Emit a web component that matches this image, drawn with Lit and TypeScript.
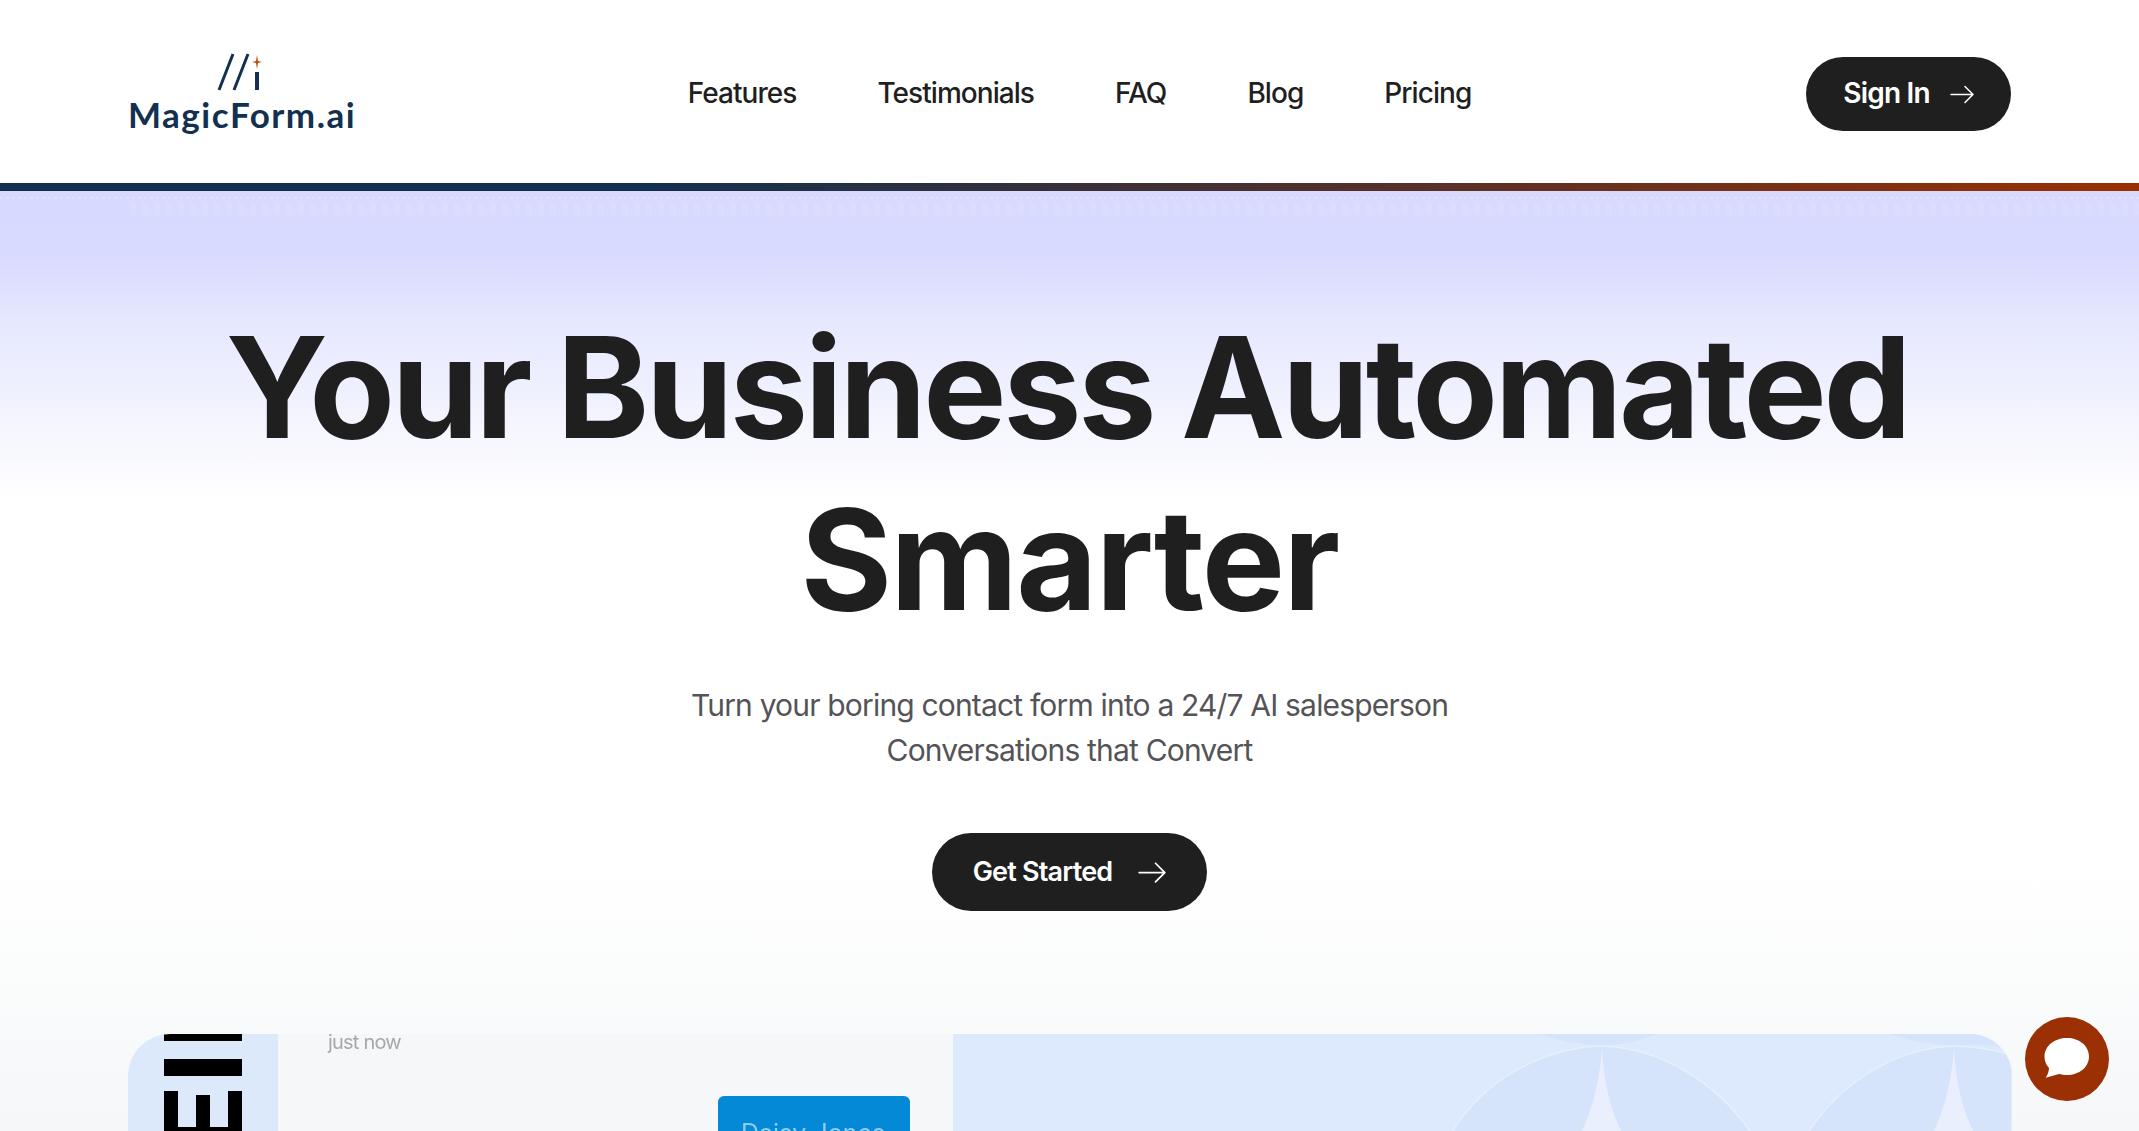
import { LitElement, html, css } from "lit";
import { customElement } from "lit/decorators.js";

const arrow = (size: number) => html`<svg class="arrow" width=${size} height=${size} viewBox="0 0 24 24" fill="none" stroke="currentColor" stroke-width="1.5" stroke-linecap="round" stroke-linejoin="round"><path d="M1 12.500h22M15 4.500l8 8-8 8"/></svg>`;

@customElement("app-root")
export class AppRoot extends LitElement {
  static styles = css`
    :host { display: block; height: 1131px; overflow: hidden; font-family: Inter, "Liberation Sans", sans-serif; color: #1f1f1f; background: #fff; position: relative; }
    header { height: 183px; display: flex; align-items: center; justify-content: space-between; padding: 5px 128px 0; box-sizing: border-box; background: #fff; }
    .logo { width: 228px; display: flex; flex-direction: column; align-items: center; color: #12304f; }
    .logo svg { display: block; }
    .logo span { font-family: Lato, sans-serif; font-size: 35px; line-height: 42px; letter-spacing: 1.5px; font-weight: 700; white-space: nowrap; }
    nav { display: flex; gap: 81px; font-size: 28px; font-weight: 500; letter-spacing: -0.95px; padding-bottom: 3px; margin-right: 3px; }
    .btn { display: inline-flex; align-items: center; justify-content: center; background: #1f1f1f; color: #fff; border-radius: 40px; font-weight: 600; box-sizing: border-box; letter-spacing: -0.8px; }
    .signin { width: 205px; height: 74px; font-size: 28px; gap: 20px; }
    .label { margin-top: -2px; }
    .bar { height: 8px; background: linear-gradient(90deg, #12304f 0%, #12304f 30%, #9a3003 100%); }
    .hero { height: 940px; background: linear-gradient(180deg, #d8d9ff 0%, #d9daff 7%, #e6e8fe 14%, #fff 33%, #fff 72%, #f5f7f8 100%); display: flex; flex-direction: column; align-items: center; position: relative; }
    .hero::before { content: ""; position: absolute; left: 0; right: 0; top: 6px; height: 2px; opacity: .7; background: repeating-linear-gradient(90deg, #e6e8fb 0 3px, transparent 3px 6px); }
    .hero::after { content: ""; position: absolute; left: 130px; right: 0; top: 12px; height: 12px; opacity: .3; background: repeating-linear-gradient(90deg, #e3e5fb 0 6px, transparent 6px 12px); }
    h1 { margin: 110px 0 0; font-size: 140px; line-height: 172px; font-weight: 650; text-align: center; position: relative; z-index: 1; }
    .l1 { display: block; letter-spacing: -3.4px; word-spacing: -2px; margin-right: 5px; }
    .l2 { display: block; letter-spacing: -1.8px; }
    p { margin: 38px 0 0; font-size: 30px; line-height: 45px; color: #545458; text-align: center; letter-spacing: -0.82px; }
    .started { margin-top: 60px; width: 275px; height: 78px; font-size: 27px; gap: 26px; flex: none; }
    .demo { position: absolute; left: 128px; top: 1034px; width: 1884px; height: 200px; border-radius: 42px 42px 0 0; overflow: hidden; display: flex; }
    .side { width: 150px; background: #dbe9fb; position: relative; flex: none; }
    .b { position: absolute; background: #000; left: 36px; width: 78px; }
    .leg { position: absolute; background: #000; width: 14px; top: 57px; height: 60px; }
    .leg.m { top: 61px; left: 68px; }
    .leg.l { left: 36px; }
    .leg.r { left: 100px; }
    .chatpane { width: 675px; background: #f5f7f8; position: relative; flex: none; }
    .time { position: absolute; left: 50px; top: -1px; font-size: 20px; line-height: 18px; color: #a6a8ac; letter-spacing: -0.8px; filter: blur(0.5px); }
    .name { position: absolute; left: 440px; top: 62px; width: 192px; height: 60px; border-radius: 6px; background: #0389d6; color: #8fcdf2; font-size: 25px; padding: 22px 0 0 23px; box-sizing: border-box; white-space: nowrap; filter: blur(0.4px); }
    .pat { flex: 1; background: #dde9fc; position: relative; overflow: hidden; }
    .pat svg { position: absolute; inset: 0; }
    .chat { position: absolute; left: 2025px; top: 1017px; width: 84px; height: 84px; border-radius: 50%; background: #9a3003; display: flex; align-items: center; justify-content: center; }
  `;

  render() {
    return html`
      <header>
        <div class="logo">
          <svg width="50" height="40" viewBox="0 0 50 40">
            <path d="M16 1 2 37M31 1 17 37" stroke="#12304f" stroke-width="3" fill="none"/>
            <path d="M38 19h4v18h-4z" fill="#12304f"/>
            <path d="M40 2l1 6 4 1-4 1-1 6-1-6-4-1 4-1z" fill="#b8500f"/>
          </svg>
          <span>MagicForm.ai</span>
        </div>
        <nav><span>Features</span><span>Testimonials</span><span>FAQ</span><span>Blog</span><span>Pricing</span></nav>
        <div class="btn signin"><span class="label">Sign In</span> ${arrow(24)}</div>
      </header>
      <div class="bar"></div>
      <section class="hero">
        <h1><span class="l1">Your Business Automated</span><span class="l2">Smarter</span></h1>
        <p>Turn your boring contact form into a 24/7 AI salesperson<br />Conversations that Convert</p>
        <div class="btn started"><span class="label">Get Started</span> ${arrow(28)}</div>
      </section>
      <div class="demo">
        <div class="side">
          <div class="b" style="top:0;height:7px"></div>
          <div class="b" style="top:25px;height:17px"></div>
          <div class="leg l"></div><div class="leg m"></div><div class="leg r"></div>
          <div class="b" style="top:93px;height:20px"></div>
        </div>
        <div class="chatpane">
          <div class="time">just now</div>
          <div class="name">Daisy Jones</div>
        </div>
        <div class="pat">
          <svg width="1059" height="100" viewBox="0 0 1059 100">
            <path d="M587 0C610 8 630 11 649 11C668 11 685 8 704 0Z" fill="#d5e4fb"/>
            <path d="M937 0C960 8 982 11 1001 11C1020 11 1040 10 1059 15V0Z" fill="#d5e4fb"/>
            <path d="M498 100C530 45 590 14 649 12C710 14 765 50 799 100Z" fill="#d5e4fb" stroke="#e7effd" stroke-width="1.5"/>
            <path d="M854 100C890 45 945 14 1001 12C1025 13 1045 16 1059 22V100Z" fill="#d5e4fb" stroke="#e7effd" stroke-width="1.5"/>
            <path d="M649 14C646 55 636 85 627 100H670C661 85 651 55 649 14Z" fill="#e9effd"/>
            <path d="M1001 14C998 55 988 85 979 100H1022C1013 85 1003 55 1001 14Z" fill="#e9effd"/>
          </svg>
        </div>
      </div>
      <div class="chat">
        <svg width="46" height="42" viewBox="0 0 46 42"><path d="M23 0C35.500 0 45 8 45 18.500S35.500 37 23 37C20 37 17.500 36.500 15 36L1.700 39.700C3.500 37 5 33.500 5 30C2 27 0.500 23 0.500 18.500C0.500 8 10.500 0 23 0Z" fill="#fff"/></svg>
      </div>
    `;
  }
}
